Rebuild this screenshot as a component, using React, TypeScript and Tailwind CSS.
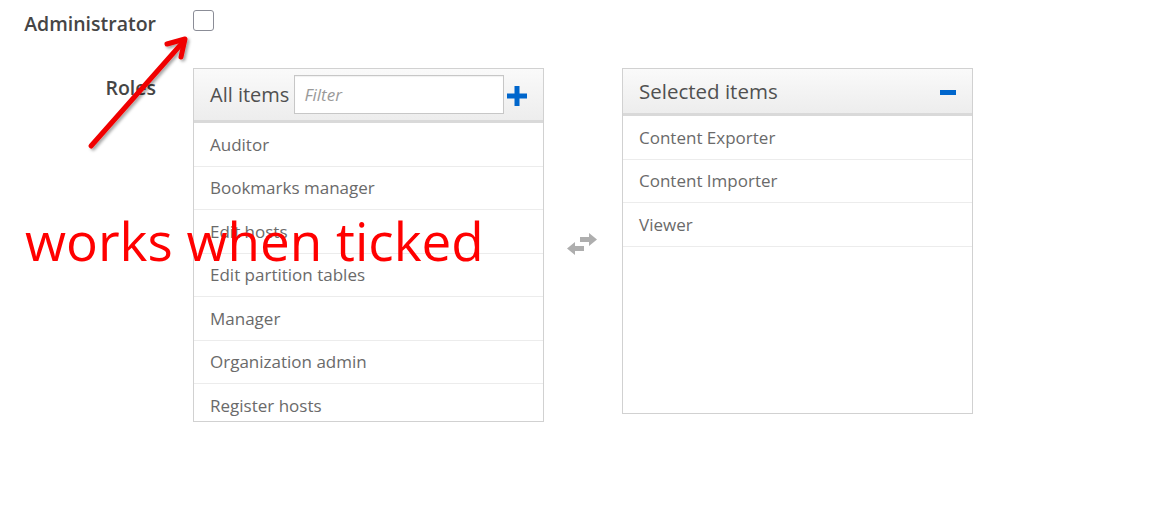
import { ReactNode } from "react";

const allItems = [
  "Auditor",
  "Bookmarks manager",
  "Edit hosts",
  "Edit partition tables",
  "Manager",
  "Organization admin",
  "Register hosts",
  "Site manager",
];

const selectedItems = ["Content Exporter", "Content Importer", "Viewer"];

const ListRow = ({ children }: { children: ReactNode }) => (
  <li className="h-[43.5px] shrink-0 flex items-center px-4 border-b border-[#ececec] text-[17px] text-[#6a6a6a]">
    {children}
  </li>
);

const PlusIcon = () => (
  <svg width="20" height="20" viewBox="0 0 20 20">
    <rect x="7.5" y="0" width="5" height="20" fill="#0066cc" />
    <rect x="0" y="7.5" width="20" height="5" fill="#0066cc" />
  </svg>
);

const SwapIcon = () => (
  <svg width="34" height="24" viewBox="0 0 34 24" className="opacity-80">
    <path d="M15 5 H24 V1 L32 7.5 L24 14 V10 H15 Z" fill="#9a9a9a" />
    <path d="M19 14 H10 V10 L2 16.5 L10 23 V19 H19 Z" fill="#9a9a9a" />
  </svg>
);

const App = () => {
  return (
    <div
      className="relative w-[1164px] h-[530px] bg-white overflow-hidden"
      style={{ fontFamily: '"Open Sans", "Noto Sans", sans-serif' }}
    >
      <div className="grid grid-cols-[156px_1fr] gap-x-[37px] pt-[10px]">
        <div className="text-right text-[19.5px] font-semibold text-[#454545] leading-[28px]">
          Administrator
        </div>
        <div>
          <div className="w-[21px] h-[21px] rounded-[3px] border border-[#8b8d97] bg-white" />
        </div>

        <div className="text-right text-[19.5px] font-semibold text-[#454545] mt-[36px] leading-[28px]">
          Roles
        </div>
        <div className="mt-[30px] flex items-start">
          {/* available list */}
          <div className="w-[351px] h-[354px] border border-[#d1d1d1] flex flex-col bg-white">
            <div className="h-[54px] shrink-0 flex items-center pl-4 pr-4 bg-gradient-to-b from-[#fafafa] to-[#ededed] border-b-[3px] border-[#d9d9d9]">
              <span className="text-[20px] text-[#505050] mr-[5px] whitespace-nowrap shrink-0">All items</span>
              <div className="w-[210px] shrink-0 h-[39px] border border-[#c7c7c7] bg-white flex items-center px-[9px] shadow-[inset_0_1px_1px_rgba(0,0,0,0.06)]">
                <span className="italic text-[17px] text-[#9a9a9a]">Filter</span>
              </div>
              <div className="ml-[3px] mt-[3px] shrink-0">
                <PlusIcon />
              </div>
            </div>
            <ul className="flex-1 overflow-hidden flex flex-col">
              {allItems.map((item) => (
                <ListRow key={item}>{item}</ListRow>
              ))}
            </ul>
          </div>

          <div className="w-[78px] h-[346px] flex items-center justify-center pr-[2px] pt-[6px]">
            <SwapIcon />
          </div>

          {/* chosen list */}
          <div className="w-[351px] h-[346px] border border-[#d1d1d1] flex flex-col bg-white">
            <div className="h-[47px] shrink-0 flex items-center justify-between pl-4 pr-4 bg-gradient-to-b from-[#fafafa] to-[#ededed] border-b-[3px] border-[#d9d9d9]">
              <span className="text-[20.5px] text-[#505050]">Selected items</span>
              <div className="w-[16px] h-[5px] bg-[#0066cc] mt-[2px]" />
            </div>
            <ul className="flex flex-col">
              {selectedItems.map((item) => (
                <ListRow key={item}>{item}</ListRow>
              ))}
            </ul>
          </div>
        </div>
      </div>

      {/* annotation overlay */}
      <svg className="absolute left-0 top-0 pointer-events-none" width="1164" height="530">
        <defs>
          <filter id="sh" x="-20%" y="-20%" width="140%" height="140%">
            <feDropShadow dx="2" dy="2" stdDeviation="1.5" floodColor="#000" floodOpacity="0.35" />
          </filter>
        </defs>
        <g filter="url(#sh)" stroke="#f00000" strokeWidth="5" strokeLinecap="round" strokeLinejoin="round" fill="none">
          <line x1="91" y1="146" x2="184" y2="41" />
          <polyline points="167,44 185,39 181,57" />
        </g>
      </svg>
      <div className="absolute left-[25px] top-[206px] text-[53px] leading-[70px] text-[#ff0000] pointer-events-none whitespace-nowrap">
        works when ticked
      </div>
    </div>
  );
};

export default App;
